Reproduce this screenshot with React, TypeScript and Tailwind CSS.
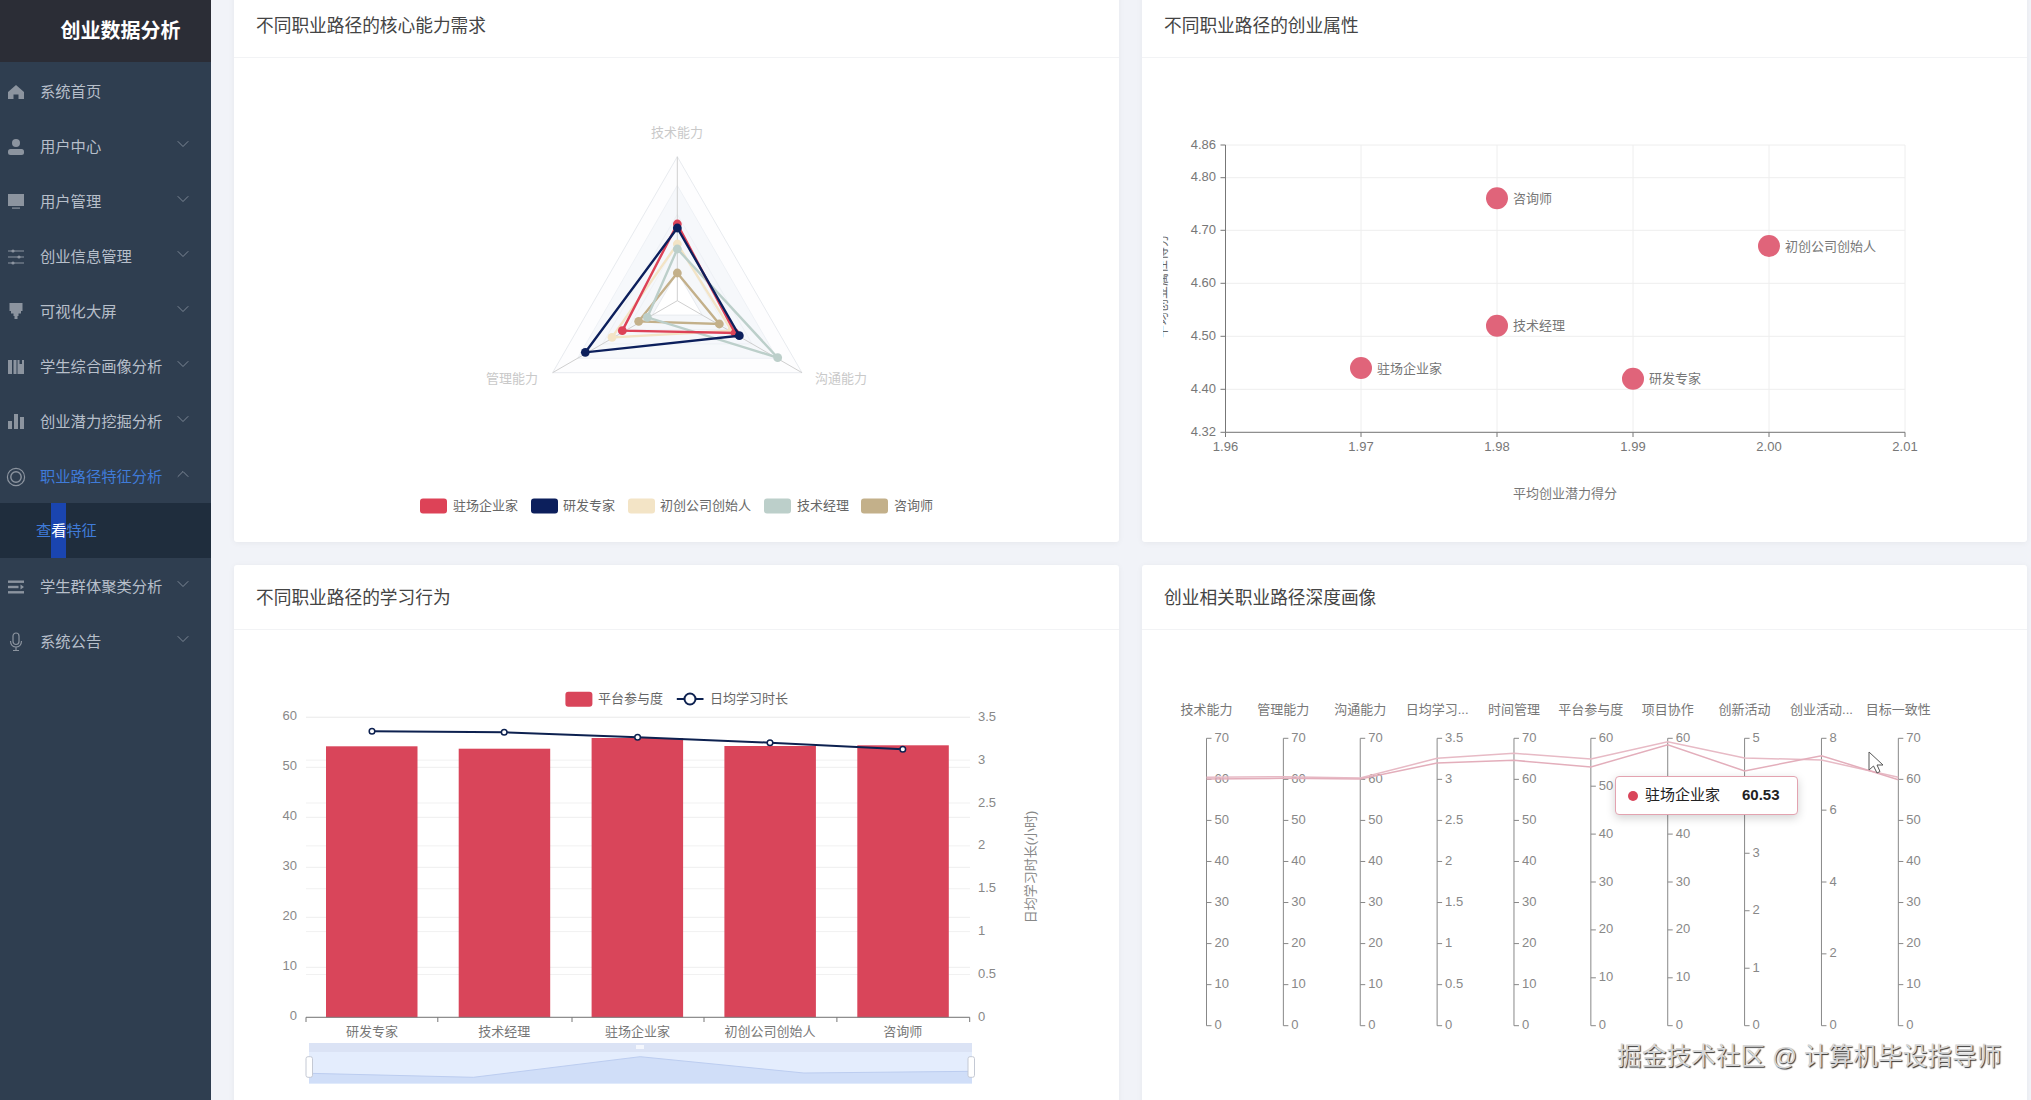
import React from "react";
import { ChevronDown, ChevronUp } from "lucide-react";

const iconFill = "#8c949f";

const icons: Record<string, React.ReactNode> = {
  home: <path d="M8 3 L16 10 V17 H10.5 V12.5 H5.5 V17 H0 V10 Z" fill={iconFill} />,
  user: (
    <>
      <circle cx="8" cy="6" r="4" fill={iconFill} />
      <rect x="0" y="12" width="16" height="6" rx="2.5" fill={iconFill} />
    </>
  ),
  monitor: (
    <>
      <rect x="0" y="2" width="16" height="12" fill={iconFill} />
      <rect x="4" y="15.5" width="8" height="1.2" fill={iconFill} />
    </>
  ),
  sliders: (
    <>
      <path d="M0 4 H16 M0 10 H16 M0 16 H16" stroke={iconFill} strokeWidth="1.1" />
      <circle cx="5" cy="4" r="1.6" fill={iconFill} />
      <circle cx="11" cy="10" r="1.6" fill={iconFill} />
      <circle cx="5" cy="16" r="1.6" fill={iconFill} />
    </>
  ),
  stamp: <path d="M1.5 1 H14.5 V9 H13 V11.5 H10.5 V14 H9.5 V17 H6.5 V14 H5.5 V11.5 H3 V9 H1.5 Z" fill={iconFill} />,
  box: (
    <>
      <rect x="0" y="3" width="4" height="14" fill={iconFill} />
      <rect x="5.5" y="3" width="3" height="14" fill={iconFill} />
      <path d="M9.5 3 H11.5 V7 H14 V3 H16 V17 H9.5 Z" fill={iconFill} />
    </>
  ),
  bars: (
    <>
      <rect x="0" y="9" width="4" height="8" fill={iconFill} />
      <rect x="6" y="2" width="4" height="15" fill={iconFill} />
      <rect x="12" y="5" width="4" height="12" fill={iconFill} />
    </>
  ),
  rings: (
    <>
      <circle cx="8" cy="10" r="8.6" fill="none" stroke={iconFill} strokeWidth="1.2" />
      <circle cx="8" cy="10" r="5.2" fill="none" stroke={iconFill} strokeWidth="1.4" />
    </>
  ),
  list: (
    <>
      <rect x="0" y="3.5" width="16" height="2.4" fill={iconFill} />
      <rect x="0" y="8.8" width="10.5" height="2.4" fill={iconFill} />
      <path d="M12.5 7.6 L16 10 L12.5 12.4 Z" fill={iconFill} />
      <rect x="0" y="14.1" width="16" height="2.4" fill={iconFill} />
    </>
  ),
  mic: (
    <>
      <rect x="5" y="1" width="6" height="11.5" rx="3" fill="none" stroke={iconFill} strokeWidth="1.2" />
      <path d="M2.5 9 C2.5 17 13.5 17 13.5 9 M8 15 V18.5 M5 18.5 H11" fill="none" stroke={iconFill} strokeWidth="1.2" />
    </>
  ),
};

const MenuRow = ({ icon, label, arrow = true, active = false }: { icon: string; label: string; arrow?: boolean; active?: boolean }) => (
  <div className="flex h-[55px] items-center pl-[8px] pr-[18px] pt-[3px]">
    <svg viewBox="0 0 16 20" className="h-[20px] w-[16px] shrink-0 overflow-visible">
      {icons[icon]}
    </svg>
    <span className={`ml-[16px] text-[15.3px] ${active ? "text-[#3f7bd9]" : "text-[#b7bfca]"}`}>{label}</span>
    {arrow &&
      (active ? (
        <ChevronUp size={20} strokeWidth={0.8} className="ml-auto -mt-[7px] text-[#a3abb6]" />
      ) : (
        <ChevronDown size={20} strokeWidth={0.8} className="ml-auto -mt-[7px] text-[#a3abb6]" />
      ))}
  </div>
);

const Sidebar = () => (
  <aside className="h-[1100px] w-[211px] shrink-0 bg-[#2f3e50]">
    <div className="flex h-[62px] items-center justify-center bg-[#2b2d36] pl-[30px] text-[20px] font-bold text-white">
      创业数据分析
    </div>
    <div className="pt-[1px]">
      <MenuRow icon="home" label="系统首页" arrow={false} />
      <MenuRow icon="user" label="用户中心" />
      <MenuRow icon="monitor" label="用户管理" />
      <MenuRow icon="sliders" label="创业信息管理" />
      <MenuRow icon="stamp" label="可视化大屏" />
      <MenuRow icon="box" label="学生综合画像分析" />
      <MenuRow icon="bars" label="创业潜力挖掘分析" />
      <MenuRow icon="rings" label="职业路径特征分析" active />
      <div className="flex h-[55px] items-stretch bg-[#1f2d3d] pl-[36px] text-[15.3px] text-[#3f7bd9]">
        <span className="flex items-center pt-[2px]">查</span>
        <span className="flex w-[15px] items-center justify-center bg-[#1a45b0] pt-[2px] text-white">看</span>
        <span className="flex items-center pt-[2px]">特征</span>
      </div>
      <MenuRow icon="list" label="学生群体聚类分析" />
      <MenuRow icon="mic" label="系统公告" />
    </div>
  </aside>
);

const Card = ({ title, className, children }: { title: string; className: string; children: React.ReactNode }) => (
  <section className={`relative overflow-hidden rounded-[3px] bg-white shadow-[0_1px_6px_rgba(0,0,0,0.05)] ${className}`}>
    <div className="flex h-[65px] items-center border-b border-[#f2f3f5] pl-[22px] pt-[2px] text-[17.7px] text-[#444]">
      {title}
    </div>
    {children}
  </section>
);

// radar
const cx = 677.3;
const cy = 301.7;
const R = 144;
const ring = (k: number) =>
  [
    [cx, cy - R * k],
    [cx + R * k * 0.866, cy + R * k * 0.5],
    [cx - R * k * 0.866, cy + R * k * 0.5],
  ]
    .map((p) => p.join(","))
    .join(" ");

const z2 = (x: number, y: number) => [x / 3 + 440, y / 3 + 110];
const radarSeries = [
  { color: "#c3b08a", pts: [[712, 492], [838, 645], [596, 637]] },
  { color: "#f3e4c6", pts: [[712, 405], [875, 665], [516, 685]] },
  { color: "#bccfca", pts: [[712, 420], [1013, 746], [622, 625]] },
  { color: "#dd4257", pts: [[712, 345], [885, 672], [547, 665]] },
  { color: "#0c1f5c", pts: [[712, 357], [898, 680], [436, 730]] },
];
const radarLegend = [
  { color: "#dd4257", x: 420, tx: 453, label: "驻场企业家" },
  { color: "#0c1f5c", x: 531, tx: 563, label: "研发专家" },
  { color: "#f3e4c6", x: 628, tx: 660, label: "初创公司创始人" },
  { color: "#bccfca", x: 764, tx: 797, label: "技术经理" },
  { color: "#c3b08a", x: 861, tx: 894, label: "咨询师" },
];

const RadarChart = () => (
  <svg width="885" height="485" className="block">
    <g transform="translate(-234,-59)">
      <polygon points={ring(1)} fill="#fdfdfe" stroke="#e8ebef" />
      <polygon points={ring(0.8)} fill="#f6f8fb" stroke="#eef1f5" />
      <polygon points={ring(0.6)} fill="#f5f7fb" stroke="#eef1f5" />
      <polygon points={ring(0.4)} fill="#f5f7fa" stroke="#eef1f5" />
      <polygon points={ring(0.2)} fill="#fff" stroke="#e8ebef" />
      {[[cx, cy - R], [cx + R * 0.866, cy + R * 0.5], [cx - R * 0.866, cy + R * 0.5]].map((p, i) => (
        <line key={i} x1={cx} y1={cy} x2={p[0]} y2={p[1]} stroke="#cfcfcf" />
      ))}
      {radarSeries.map((s) => {
        const pts = s.pts.map((p) => z2(p[0], p[1]));
        return (
          <g key={s.color}>
            <polygon points={pts.map((p) => p.join(",")).join(" ")} fill="none" stroke={s.color} strokeWidth="2.4" />
            {pts.map((p, i) => (
              <circle key={i} cx={p[0]} cy={p[1]} r="4.4" fill={s.color} />
            ))}
          </g>
        );
      })}
      <text x={677} y={133} textAnchor="middle" dominantBaseline="central" fontSize="13" fill="#c9c9c9">技术能力</text>
      <text x={512} y={379} textAnchor="middle" dominantBaseline="central" fontSize="13" fill="#c9c9c9">管理能力</text>
      <text x={841} y={379} textAnchor="middle" dominantBaseline="central" fontSize="13" fill="#c9c9c9">沟通能力</text>
      {radarLegend.map((l) => (
        <g key={l.label}>
          <rect x={l.x} y={499.5} width="27" height="15" rx="3" fill={l.color} />
          <text x={l.tx} y={506} dominantBaseline="central" fontSize="13" fill="#666">{l.label}</text>
        </g>
      ))}
    </g>
  </svg>
);

// scatter
const sxTicks = [
  ["1.96", 1225.5],
  ["1.97", 1361],
  ["1.98", 1497],
  ["1.99", 1633],
  ["2.00", 1769],
  ["2.01", 1905],
] as const;
const syTicks = [
  ["4.86", 146],
  ["4.80", 178.7],
  ["4.70", 231.3],
  ["4.60", 284.3],
  ["4.50", 337.3],
  ["4.40", 390.3],
  ["4.32", 433.3],
] as const;
const scatterPoints = [
  { x: 1497, y: 199.3, label: "咨询师" },
  { x: 1769, y: 247, label: "初创公司创始人" },
  { x: 1497, y: 326.7, label: "技术经理" },
  { x: 1361, y: 369, label: "驻场企业家" },
  { x: 1633, y: 379.7, label: "研发专家" },
];

const ScatterChart = () => (
  <svg width="885" height="485" className="block">
    <defs>
      <clipPath id="yname">
        <rect x="1163" y="200" width="40" height="170" />
      </clipPath>
    </defs>
    <g transform="translate(-1142,-59)">
      {syTicks.map(([t, y]) => (
        <g key={t}>
          <line x1={1225.5} x2={1905} y1={y} y2={y} stroke="#eeeeee" />
          <line x1={1220.5} x2={1225.5} y1={y} y2={y} stroke="#777" />
          <text x={1216} y={y - 1} textAnchor="end" dominantBaseline="central" fontSize="13" fill="#777">{t}</text>
        </g>
      ))}
      {sxTicks.map(([t, x]) => (
        <g key={t}>
          <line x1={x} x2={x} y1={146} y2={433.3} stroke="#eeeeee" />
          <line x1={x} x2={x} y1={433.3} y2={438} stroke="#777" />
          <text x={x} y={447} textAnchor="middle" dominantBaseline="central" fontSize="13" fill="#777">{t}</text>
        </g>
      ))}
      <path d="M1225.5 146 V433.3 H1905" fill="none" stroke="#777" />
      {scatterPoints.map((p) => (
        <g key={p.label}>
          <circle cx={p.x} cy={p.y} r="11" fill="#e0647a" />
          <text x={p.x + 16} y={p.y} dominantBaseline="central" fontSize="13" fill="#777">{p.label}</text>
        </g>
      ))}
      <text x={1565} y={494} textAnchor="middle" dominantBaseline="central" fontSize="13" fill="#777">平均创业潜力得分</text>
      <g clipPath="url(#yname)">
        <text transform="translate(1161,287) rotate(-90)" textAnchor="middle" dominantBaseline="central" fontSize="13" fill="#666">平均创业属性得分</text>
      </g>
    </g>
  </svg>
);

// bars
const barData = [
  { name: "研发专家", x: 326, top: 747.3, cx: 372, ly: 732.3 },
  { name: "技术经理", x: 458.7, top: 749.7, cx: 504.2, ly: 733.3 },
  { name: "驻场企业家", x: 591.6, top: 739, cx: 637.6, ly: 738.3 },
  { name: "初创公司创始人", x: 724.4, top: 747, cx: 770, ly: 743.7 },
  { name: "咨询师", x: 857.3, top: 746.3, cx: 902.8, ly: 750.3 },
];
const leftTicks = [60, 50, 40, 30, 20, 10, 0];
const rightTicks = ["3.5", "3", "2.5", "2", "1.5", "1", "0.5", "0"];

const BarChart = () => (
  <svg width="885" height="470" className="block">
    <g transform="translate(-234,-631)">
      {rightTicks.map((t, i) => {
        const y = 718.3 + i * 42.86;
        return (
          <g key={t}>
            <line x1={306} x2={970} y1={y} y2={y} stroke="#f1f1f1" />
            <text x={978} y={y - 1} dominantBaseline="central" fontSize="13" fill="#888">{t}</text>
          </g>
        );
      })}
      {leftTicks.map((t, i) => {
        const y = 718.3 + i * 50;
        return (
          <g key={t}>
            <line x1={306} x2={970} y1={y} y2={y} stroke="#eeeeee" />
            <text x={297} y={y - 2} textAnchor="end" dominantBaseline="central" fontSize="13" fill="#888">{t}</text>
          </g>
        );
      })}
      {barData.map((b) => (
        <g key={b.name}>
          <rect x={b.x} y={b.top} width="91.5" height={1018.3 - b.top} fill="#d9455a" />
          <text x={b.cx} y={1032} textAnchor="middle" dominantBaseline="central" fontSize="13" fill="#777">{b.name}</text>
        </g>
      ))}
      <path d="M306 1023 V1018.3 H969.7 V1023 M437.8 1018.3 V1023 M572 1018.3 V1023 M704 1018.3 V1023 M836.9 1018.3 V1023" fill="none" stroke="#777" />
      <polyline points={barData.map((b) => `${b.cx},${b.ly}`).join(" ")} fill="none" stroke="#0d2150" strokeWidth="2" />
      {barData.map((b) => (
        <circle key={b.cx} cx={b.cx} cy={b.ly} r="2.8" fill="#fff" stroke="#0d2150" strokeWidth="1.5" />
      ))}
      <rect x={565.4} y={692.7} width="27" height="15" rx="3" fill="#d9455a" />
      <text x={598} y={699} dominantBaseline="central" fontSize="13" fill="#666">平台参与度</text>
      <line x1={676.8} x2={703.5} y1={700} y2={700} stroke="#0d2150" strokeWidth="2" />
      <circle cx={690} cy={700} r="5.5" fill="#fff" stroke="#0d2150" strokeWidth="2" />
      <text x={710} y={699} dominantBaseline="central" fontSize="13" fill="#666">日均学习时长</text>
      <text transform="translate(1030,868) rotate(-90)" textAnchor="middle" dominantBaseline="central" fontSize="13" fill="#888">日均学习时长(小时)</text>
      <rect x={309} y={1044} width="663" height="40.5" fill="#e4edfd" />
      <rect x={309} y={1044} width="663" height="9" fill="#dbe3f5" />
      <rect x={636} y={1046} width="8" height="4" fill="#f4f7fd" />
      <path d="M309 1074.3 L473.4 1078.3 L640.2 1057.7 L803.9 1074 L972 1072.3 V1084.5 H309 Z" fill="#d0def8" stroke="none" />
      <path d="M309 1074.3 L473.4 1078.3 L640.2 1057.7 L803.9 1074 L972 1072.3" fill="none" stroke="#bccdf0" />
      <rect x={306} y={1057.7} width="6.5" height="20.6" rx="2" fill="#fff" stroke="#c4c9d4" />
      <rect x={968} y={1057.7} width="6.5" height="20.6" rx="2" fill="#fff" stroke="#c4c9d4" />
    </g>
  </svg>
);

// parallel axes
const seven = ["70", "60", "50", "40", "30", "20", "10", "0"];
const axes = [
  { name: "技术能力", ticks: seven },
  { name: "管理能力", ticks: seven },
  { name: "沟通能力", ticks: seven },
  { name: "日均学习...", ticks: ["3.5", "3", "2.5", "2", "1.5", "1", "0.5", "0"] },
  { name: "时间管理", ticks: seven },
  { name: "平台参与度", ticks: ["60", "50", "40", "30", "20", "10", "0"] },
  { name: "项目协作", ticks: ["60", "50", "40", "30", "20", "10", "0"] },
  { name: "创新活动", ticks: ["5", "4", "3", "2", "1", "0"] },
  { name: "创业活动...", ticks: ["8", "6", "4", "2", "0"] },
  { name: "目标一致性", ticks: seven },
];
const axisX = (i: number) => 1206.5 + i * 76.87;
const lineA = [295, 293, 297, 238, 223, 240, 188, 237, 243, 295];
const lineB = [300, 298, 300, 252, 244, 264, 197, 276, 230, 302];
const toLine = (vals: number[]) => vals.map((v, i) => `${axisX(i)},${v / 3 + 680}`).join(" ");

const ParallelChart = () => (
  <svg width="885" height="470" className="block">
    <g transform="translate(-1142,-631)">
      {axes.map((a, i) => {
        const x = axisX(i);
        return (
          <g key={a.name}>
            <text x={x} y={710} textAnchor="middle" dominantBaseline="central" fontSize="13" fill="#777">{a.name}</text>
            <line x1={x} x2={x} y1={739.3} y2={1026.7} stroke="#888" />
            {a.ticks.map((t, k) => {
              const y = 739.3 + (k * 287.4) / (a.ticks.length - 1);
              return (
                <g key={t}>
                  <line x1={x} x2={x + 5} y1={y} y2={y} stroke="#888" />
                  <text x={x + 8} y={y - 1} dominantBaseline="central" fontSize="13" fill="#888">{t}</text>
                </g>
              );
            })}
          </g>
        );
      })}
      <polyline points={toLine(lineA)} fill="none" stroke="#e7bac5" strokeWidth="1.5" />
      <polyline points={toLine(lineB)} fill="none" stroke="#e3aebb" strokeWidth="1.5" />
      <path d="M1869 753 L1869 771 L1873.5 767 L1877 774 L1880 772.5 L1877 766 L1883 766 Z" fill="#fff" stroke="#555" />
    </g>
  </svg>
);

export default function App() {
  return (
    <div className="relative flex h-[1100px] overflow-hidden bg-[#f1f3f8] font-['Liberation_Sans','Noto_Sans_CJK_SC',sans-serif]">
      <Sidebar />
      <main className="min-w-0 flex-1 pl-[23px] pr-[4px]">
        <div className="-mt-[7px] grid grid-cols-2 gap-x-[23px] gap-y-[23.5px]">
          <Card title="不同职业路径的核心能力需求" className="h-[548.5px]">
            <RadarChart />
          </Card>
          <Card title="不同职业路径的创业属性" className="h-[548.5px]">
            <ScatterChart />
          </Card>
          <Card title="不同职业路径的学习行为" className="h-[560px]">
            <BarChart />
          </Card>
          <Card title="创业相关职业路径深度画像" className="h-[560px]">
            <ParallelChart />
            <div className="absolute left-[473px] top-[211px] flex h-[39px] w-[183px] items-center rounded-[4px] border border-[#e3a3b0] bg-white pl-[12px] text-[15px] text-[#222] shadow-[0_3px_10px_rgba(0,0,0,0.18)]">
              <span className="h-[10px] w-[10px] rounded-full bg-[#d9455a]" />
              <span className="ml-[7px]">驻场企业家</span>
              <span className="ml-[22px] font-bold">60.53</span>
            </div>
          </Card>
        </div>
      </main>
      <div className="absolute left-[1617px] top-[1041px] whitespace-nowrap text-[24.7px] leading-[32px] text-[#d6d6d6] [text-shadow:1px_1px_1px_#333]">
        掘金技术社区 @ 计算机毕设指导师
      </div>
    </div>
  );
}
